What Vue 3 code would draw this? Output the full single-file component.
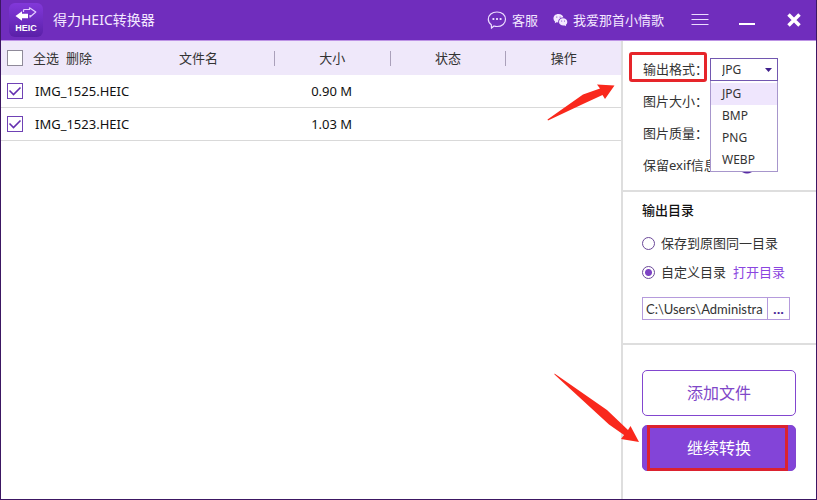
<script setup>
import { ref, computed } from 'vue'

const files = ref([
  { name: 'IMG_1525.HEIC', size: '0.90 M', checked: true },
  { name: 'IMG_1523.HEIC', size: '1.03 M', checked: true }
])
const all = ref(false)
const formats = ['JPG', 'BMP', 'PNG', 'WEBP']
const format = ref('JPG')
const target = ref('custom')
const path = ref('C:\\Users\\Administra')
const selected = computed(() => files.value.filter(f => f.checked))

function toggleAll() {
  files.value.forEach(f => { f.checked = all.value })
}
function removeSelected() {
  files.value = files.value.filter(f => !selected.value.includes(f))
}
</script>

<template>
  <div class="window">
    <header class="titlebar">
      <div class="logo">
        <svg width="22" height="16" viewBox="0 0 22 16" aria-hidden="true">
          <path d="M8.500 5V3.500Q8.500 2.500 9.500 2.500H14.500V.8L20.800 5L15 10V8" fill="none" stroke="#e3ccff" stroke-width="1.200" stroke-linejoin="round" />
          <path d="M0.500 9L7 4.300V6.800H13V11.200H7V13.800Z" fill="#fff" />
        </svg>
        <span class="logo-text">HEIC</span>
      </div>
      <h1>得力HEIC转换器</h1>
      <a class="service" href="#">
        <svg width="20" height="20" viewBox="0 0 20 20" fill="none" stroke="#ecdcff" aria-hidden="true">
          <path d="M10 2C15 2 18.500 5 18.500 9.300C18.500 13.500 15 16.500 10 16.500Q8.500 16.500 7 16L4.500 18L4.300 14.800C2.500 13.500 1.300 11.700 1.300 9.300C1.300 5 5 2 10 2Z" stroke-width="1.200" />
          <path d="M5.500 9H7.300M9.100 9H10.900M12.700 9H14.500" stroke-width="1.800" />
        </svg>
        客服
      </a>
      <a class="user" href="#">
        <svg width="15" height="14" viewBox="0 0 15 14" aria-hidden="true">
          <path d="M5.500 1C8 1 10 2.500 10.400 4.500C7 4.500 4.900 6.500 5.300 9.500L3.500 9.300L1.800 10.300L2.100 8.700C0 7.200 0 4 1.500 2.500C2.500 1.500 4 1 5.500 1Z" fill="#f3e8ff" />
          <path d="M10 5.300C12.500 5.300 14.300 7 14.300 9C14.300 10.200 13.700 11.200 12.800 11.900L13.100 13.300L11.600 12.500C8.500 13 6 11.300 6 9C6 7 7.700 5.300 10 5.300Z" fill="#f3e8ff" />
          <g fill="#702dbd"><circle cx="3.800" cy="4" r=".6" /><circle cx="7.100" cy="4" r=".6" /><circle cx="8.700" cy="8" r=".5" /><circle cx="11.500" cy="8" r=".5" /></g>
        </svg>
        我爱那首小情歌
      </a>
      <button class="win-btn" aria-label="菜单">
        <svg width="18" height="14" viewBox="0 0 18 14" stroke="#ecdcff" stroke-width="1"><path d="M.5 1.500H17.500M.5 6.500H17.500M.5 11.500H17.500" /></svg>
      </button>
      <button class="win-btn" aria-label="最小化">
        <svg width="18" height="14" viewBox="0 0 18 14" stroke="#fff" stroke-width="2"><path d="M1 11H17" /></svg>
      </button>
      <button class="win-btn" aria-label="关闭">
        <svg width="18" height="14" viewBox="0 0 18 14" stroke="#fff" stroke-width="3.500"><path d="M3.500 1.500L14.500 12.500M14.500 1.500L3.500 12.500" /></svg>
      </button>
    </header>

    <main class="body">
      <section class="list">
        <table>
          <colgroup><col class="c-name"><col><col><col></colgroup>
          <thead>
            <tr>
              <th>
                <div class="name-head">
                  <input id="all" v-model="all" type="checkbox" @change="toggleAll">
                  <label for="all">全选</label>
                  <button class="plain" @click="removeSelected">删除</button>
                  <span class="name-title">文件名</span>
                </div>
              </th>
              <th><div class="split">大小</div></th>
              <th><div class="split">状态</div></th>
              <th><div class="split">操作</div></th>
            </tr>
          </thead>
          <tbody>
            <tr v-for="f in files" :key="f.name">
              <td>
                <label class="file"><input v-model="f.checked" type="checkbox"><span>{{ f.name }}</span></label>
              </td>
              <td class="size">{{ f.size }}</td>
              <td></td>
              <td></td>
            </tr>
          </tbody>
        </table>
      </section>

      <aside class="side">
        <section class="options">
          <div class="field">
            <label class="marked" for="format">输出格式：</label>
            <div class="combo">
              <select id="format" v-model="format">
                <option v-for="f in formats" :key="f">{{ f }}</option>
              </select>
              <svg class="caret" width="7" height="4" viewBox="0 0 7 4" aria-hidden="true"><path d="M0 0H7L3.500 4Z" fill="#40208c" /></svg>
              <ul class="menu">
                <li v-for="f in formats" :key="f" :class="{ on: f === format }" @click="format = f">{{ f }}</li>
              </ul>
            </div>
          </div>
          <div class="field"><span>图片大小：</span></div>
          <div class="field"><span>图片质量：</span></div>
          <div class="field exif">
            <label for="exif">保留exif信息</label>
            <input id="exif" class="switch" type="checkbox" checked>
          </div>
        </section>

        <section class="target">
          <h2>输出目录</h2>
          <div class="choice">
            <input id="same" v-model="target" type="radio" name="target" value="same">
            <label for="same">保存到原图同一目录</label>
          </div>
          <div class="choice">
            <input id="custom" v-model="target" type="radio" name="target" value="custom">
            <label for="custom">自定义目录</label>
            <a href="#">打开目录</a>
          </div>
          <div class="path">
            <input v-model="path" type="text" aria-label="目录">
            <button aria-label="浏览">...</button>
          </div>
        </section>

        <section class="actions">
          <button class="add">添加文件</button>
          <button class="go"><span class="frame"></span>继续转换</button>
        </section>

        <svg class="arrow arrow-format" width="68" height="38" viewBox="0 0 68 38" aria-hidden="true">
          <path d="M0.500 36.500L36 11.500L53 5.500L50 1.500L67.500 2.500L58 16L55.500 12L36 21L1 37.500Z" fill="#f9281c" />
        </svg>
        <svg class="arrow arrow-go" width="86" height="70" viewBox="0 0 86 70" aria-hidden="true">
          <path d="M0.500 0.500L53 37L74 57L76.500 53L85 69L67 66L70 62L55 51.500L0.500 1.500Z" fill="#f9281c" />
        </svg>
      </aside>
    </main>
  </div>
</template>

<style>
body {
  margin: 0;
}
</style>

<style scoped>
* {
  box-sizing: border-box;
}
.window {
  display: flex;
  flex-direction: column;
  min-height: 100vh;
  border: 1px solid #3c1763;
  border-top: 0;
  background: #fff;
  color: #333;
  font: 13px/18px "Noto Sans", "Noto Sans CJK SC", sans-serif;
}
button, input, select {
  font: inherit;
  color: inherit;
  margin: 0;
}
a {
  text-decoration: none;
}
.titlebar {
  display: flex;
  align-items: center;
  height: 41px;
  padding: 0 13px 0 8px;
  background: #702dbd;
  border-bottom: 1px solid #bd93e5;
  color: #f3e8ff;
}
.logo {
  display: flex;
  flex-direction: column;
  align-items: center;
  width: 34px;
  height: 34px;
  padding-top: 4px;
  border-radius: 6px;
  background: linear-gradient(#8238da, #5a20a8);
}
.logo-text {
  font: bold 9px/10px "Liberation Sans", sans-serif;
  color: #fff;
}
h1 {
  flex: 1;
  margin: 0 0 0 10px;
  font-size: 14px;
  font-weight: 400;
}
.service, .user {
  display: flex;
  align-items: center;
  gap: 5px;
  color: inherit;
}
.user {
  margin: 0 27px 0 15px;
}
.win-btn {
  display: flex;
  padding: 0;
  border: 0;
  background: none;
}
.win-btn + .win-btn {
  margin-left: 29px;
}
.body {
  flex: 1;
  display: flex;
}
.list {
  flex: 1;
}
table {
  width: 100%;
  table-layout: fixed;
  border-collapse: separate;
  border-spacing: 0;
}
.c-name {
  width: 44%;
}
th {
  height: 34px;
  padding: 0;
  background: #efe8fa;
  font-weight: 400;
}
td {
  height: 33px;
  padding: 0;
  border-bottom: 1px solid #d9d9d9;
  color: #111;
}
.name-head, .file {
  display: flex;
  align-items: center;
  padding-left: 6px;
}
.name-head label {
  margin: 0 7px 0 10px;
}
.file {
  gap: 12px;
}
.plain {
  padding: 0;
  border: 0;
  background: none;
}
.name-title {
  margin-left: 87px;
}
.split {
  height: 15px;
  line-height: 15px;
  border-left: 1px solid #aaa0ba;
}
.size {
  text-align: center;
}
input[type="checkbox"]:not(.switch) {
  appearance: none;
  width: 16px;
  height: 16px;
  border: 1px solid #8f8a99;
  background: #fff;
}
.file input[type="checkbox"]:checked {
  border-color: #6f42b5;
  background: #fff url("data:image/svg+xml,%3Csvg xmlns='http://www.w3.org/2000/svg' viewBox='0 0 14 14'%3E%3Cpath d='M1.500 6.500L5.500 10.500L12.500 3.500' fill='none' stroke='%236530b0' stroke-width='1.600'/%3E%3C/svg%3E");
}
.side {
  position: relative;
  flex: 0 0 195px;
  min-width: 0;
  border-left: 2px solid #dedede;
}
.options {
  display: flex;
  flex-direction: column;
  gap: 8px;
  padding: 16px 18px 13px 20px;
}
.field {
  display: flex;
  align-items: center;
  height: 24px;
}
.field > :first-child {
  flex: 0 0 67px;
  white-space: nowrap;
}
.marked {
  position: relative;
}
.marked::after {
  content: "";
  position: absolute;
  inset: -8px 3px -4px -14px;
  border: 3px solid #e6252a;
  border-radius: 3px;
}
.combo {
  position: relative;
  flex: 0 0 68px;
}
select {
  display: block;
  appearance: none;
  width: 100%;
  height: 23px;
  padding: 1px 11px 0;
  border: 1px solid #7257b0;
  border-radius: 0;
  background: #fff;
  font-size: 12px;
}
.caret {
  position: absolute;
  top: 10px;
  right: 6px;
}
.menu {
  position: absolute;
  z-index: 1;
  top: 23px;
  left: 0;
  right: 0;
  margin: 0;
  padding: 2px 0 0;
  border: 1px solid #a796cc;
  border-top: 0;
  background: #fff;
  list-style: none;
  font-size: 12px;
  line-height: 22px;
}
.menu li {
  padding-left: 11px;
}
.menu .on {
  background: #efe6fd;
}
.exif {
  gap: 11px;
}
.switch {
  appearance: none;
  width: 28px;
  height: 20px;
  background: radial-gradient(circle at 19px 10px, #5a2da5 8px, transparent 9px);
}
.target {
  padding: 9px 26px 23px 19px;
  border-top: 2px solid #dedede;
}
h2 {
  margin: 0 0 15px;
  font-size: 13px;
  font-weight: 500;
  color: #111;
}
.choice {
  display: flex;
  align-items: center;
  margin-bottom: 11px;
}
.choice label {
  margin: 0 7px 0 6px;
}
.choice a {
  color: #8a45e0;
}
input[type="radio"] {
  appearance: none;
  width: 13px;
  height: 13px;
  border: 1px solid #6b4899;
  border-radius: 50%;
  background: #fff;
}
input[type="radio"]:checked {
  background: radial-gradient(circle, #7d43c4 3px, #fff 4px);
}
.path {
  display: flex;
  height: 23px;
  margin-top: 16px;
  border: 1px solid #b59bdc;
}
.path input {
  flex: 1;
  width: 0;
  min-width: 0;
  padding: 0 3px;
  border: 0;
  background: none;
  font-family: Lato, sans-serif;
  font-size: 13px;
}
.path button {
  flex: 0 0 22px;
  padding: 0;
  border: 0;
  border-left: 1px solid #b59bdc;
  background: none;
  color: #4a1f96;
  font-weight: 700;
}
.actions {
  display: flex;
  flex-direction: column;
  gap: 9px;
  padding: 25px 20px 24px 19px;
  border-top: 2px solid #dedede;
}
.actions button {
  position: relative;
  height: 46px;
  padding: 0;
  border: 1px solid #8246cf;
  border-radius: 5px;
  background: #fff;
  color: #7f47c8;
  font-size: 16px;
}
.actions .go {
  background: #8344d8;
  color: #fff;
}
.frame {
  position: absolute;
  inset: -1px 7px -1px 4px;
  border: 3px solid #dc222f;
}
.arrow {
  position: absolute;
  pointer-events: none;
}
.arrow-format {
  top: 42px;
  left: -76px;
}
.arrow-go {
  top: 332px;
  left: -69px;
}
</style>
